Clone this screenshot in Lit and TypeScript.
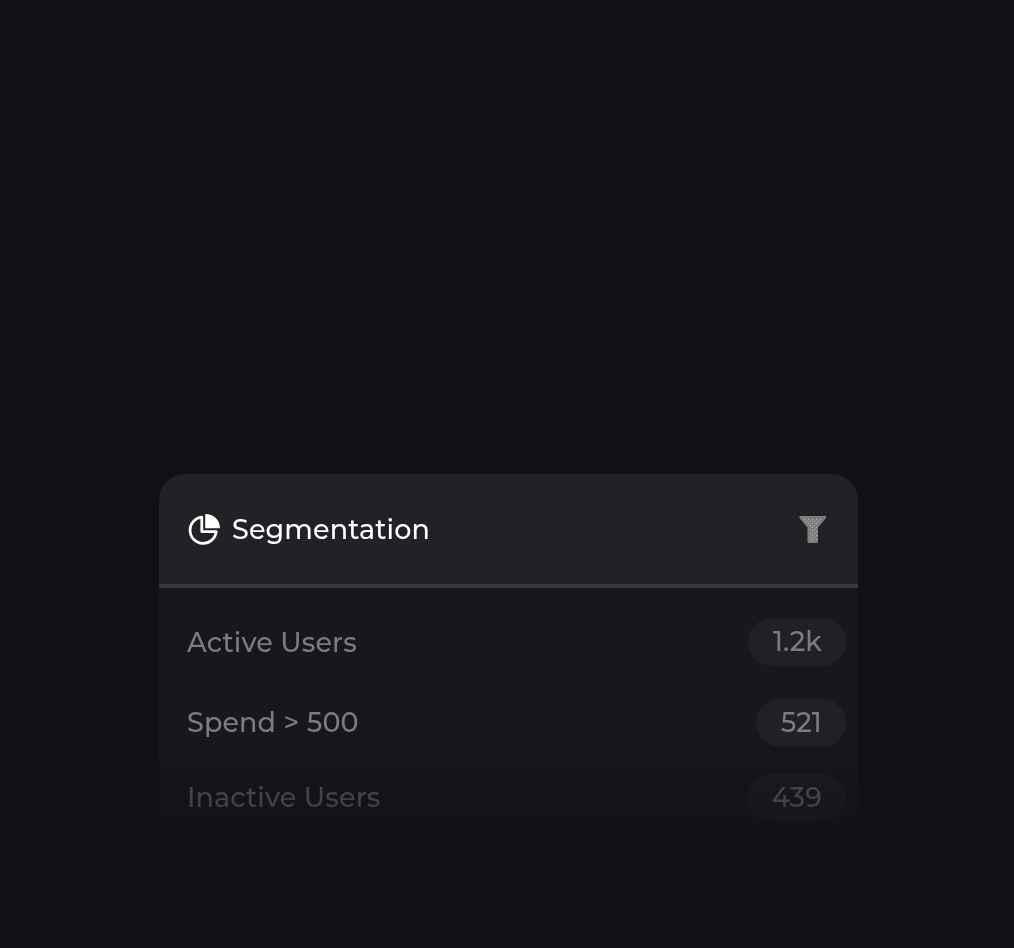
import { LitElement, html, css } from "lit";
import { customElement } from "lit/decorators.js";

interface Segment {
  name: string;
  count: string;
}

const segments: Segment[] = [
  { name: "Active Users", count: "1.2k" },
  { name: "Spend > 500", count: "521" },
  { name: "Inactive Users", count: "439" },
];

@customElement("app-root")
export class AppRoot extends LitElement {
  static styles = css`
    :host {
      display: block;
      box-sizing: border-box;
      height: 948px;
      padding: 474px 156px 0 159px;
      overflow: hidden;
      background: #101115;
      font-family: Montserrat, Inter, sans-serif;
      font-size: 27px;
      font-weight: 500;
      line-height: 32px;
      letter-spacing: 0.13px;
    }
    .card {
      box-sizing: border-box;
      height: 382px;
      overflow: hidden;
      border-radius: 26px;
      background: #17181b;
      -webkit-mask-image: linear-gradient(#000 0 69%, rgba(0, 0, 0, 0.8) 75%, rgba(0, 0, 0, 0.5) 82%, rgba(0, 0, 0, 0.43) 88%, rgba(0, 0, 0, 0.12) 100%);
      mask-image: linear-gradient(#000 0 69%, rgba(0, 0, 0, 0.8) 75%, rgba(0, 0, 0, 0.5) 82%, rgba(0, 0, 0, 0.43) 88%, rgba(0, 0, 0, 0.12) 100%);
    }
    .header {
      display: flex;
      align-items: center;
      height: 110px;
      padding: 0 31px 0 29px;
      background: #212226;
    }
    .divider {
      height: 4px;
      background: repeating-conic-gradient(#45464a 0 25%, #2b2c30 0 50%) 0 0 / 2px 2px;
    }
    .pie {
      width: 32px;
      height: 32px;
      margin-right: 12px;
    }
    .title {
      flex: 1;
      padding-top: 1px;
      color: #fff;
    }
    .funnel {
      width: 28px;
      height: 28px;
    }
    .list {
      display: grid;
      grid-template-rows: 48px 48px 48px;
      row-gap: 33px;
      padding: 30px 12px 0 28px;
    }
    .row {
      display: flex;
      align-items: center;
      justify-content: space-between;
      color: #7c7c7d;
    }
    .row:first-child .name {
      padding: 1px 0 0;
    }
    .row:last-child {
      margin-top: -6px;
      margin-bottom: 6px;
    }
    .name {
      padding-bottom: 1px;
    }
    .pill {
      box-sizing: border-box;
      display: flex;
      align-items: center;
      height: 48px;
      padding: 0 24px 0 25px;
      border-radius: 24px;
      background: #202125;
    }
  `;

  render() {
    return html`
      <section class="card">
        <header class="header">
          <svg class="pie" viewBox="0 0 32 32" fill="none">
            <path d="M13.8 4.2A13.1 13.1 0 1 0 28.2 18.6H13.8Z" stroke="#fff" stroke-width="2.8" stroke-linejoin="round" />
            <path d="M17.2 1C25.5 1 32 7 32 15.2H17.2Z" fill="#fff" />
          </svg>
          <span class="title">Segmentation</span>
          <svg class="funnel" viewBox="0 0 28 28">
            <defs>
              <pattern id="grain" width="4" height="4" patternUnits="userSpaceOnUse">
                <rect x="1" y="0" width="1" height="1" fill="#b4b4b4" />
                <rect x="3" y="2" width="1" height="1" fill="#b4b4b4" />
              </pattern>
            </defs>
            <path d="M.5 1H27V3L19 12.5V26.5Q19 28 17.5 28H10Q8.5 28 8.5 26.5V12.5L.5 3Z" fill="#7e7e7e" />
            <path d="M3 3H25L18 11V26H10V11Z" fill="url(#grain)" />
          </svg>
        </header>
        <div class="divider"></div>
        <div class="list">
          ${segments.map(
            (s) => html`
              <div class="row">
                <span class="name">${s.name}</span>
                <span class="pill">${s.count}</span>
              </div>
            `
          )}
        </div>
      </section>
    `;
  }
}
